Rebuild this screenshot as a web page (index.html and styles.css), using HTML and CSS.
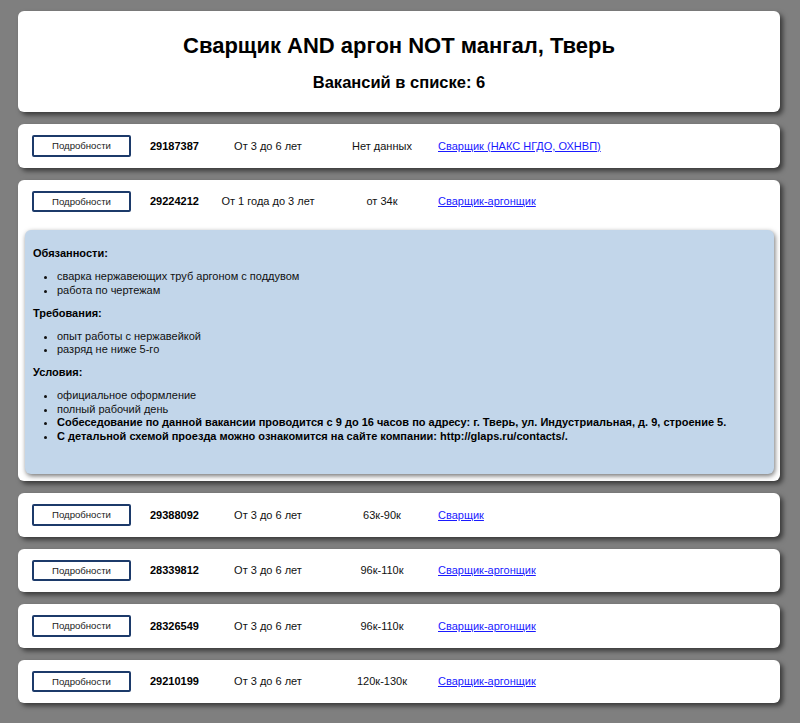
FILE: index.html
```html
<!DOCTYPE html>
<html lang="ru">
<head>
<meta charset="utf-8">
<title>Вакансии</title>
<link rel="stylesheet" href="styles.css">
</head>
<body>
<div class="page">
  <header class="card header">
    <h1 class="title">Сварщик AND аргон NOT мангал, Тверь</h1>
    <h2 class="count">Вакансий в списке: 6</h2>
  </header>

  <div class="card">
    <div class="row">
      <button class="btn">Подробности</button>
      <span class="c-id">29187387</span>
      <span class="c-exp">От 3 до 6 лет</span>
      <span class="c-sal">Нет данных</span>
      <a class="c-name" href="#">Сварщик (НАКС НГДО, ОХНВП)</a>
    </div>
  </div>

  <div class="card">
    <div class="row">
      <button class="btn">Подробности</button>
      <span class="c-id">29224212</span>
      <span class="c-exp">От 1 года до 3 лет</span>
      <span class="c-sal">от 34к</span>
      <a class="c-name" href="#">Сварщик-аргонщик</a>
    </div>
    <div class="details">
      <p class="sec"><strong>Обязанности:</strong></p>
      <ul class="list">
        <li>сварка нержавеющих труб аргоном с поддувом</li>
        <li>работа по чертежам</li>
      </ul>
      <p class="sec"><strong>Требования:</strong></p>
      <ul class="list">
        <li>опыт работы с нержавейкой</li>
        <li>разряд не ниже 5-го</li>
      </ul>
      <p class="sec"><strong>Условия:</strong></p>
      <ul class="list last">
        <li>официальное оформление</li>
        <li>полный рабочий день</li>
        <li><strong>Собеседование по данной вакансии проводится с 9 до 16 часов по адресу: г. Тверь, ул. Индустриальная, д. 9, строение 5.</strong></li>
        <li><strong>С детальной схемой проезда можно ознакомится на сайте компании: http://glaps.ru/contacts/.</strong></li>
      </ul>
    </div>
  </div>

  <div class="card">
    <div class="row">
      <button class="btn">Подробности</button>
      <span class="c-id">29388092</span>
      <span class="c-exp">От 3 до 6 лет</span>
      <span class="c-sal">63к-90к</span>
      <a class="c-name" href="#">Сварщик</a>
    </div>
  </div>

  <div class="card">
    <div class="row">
      <button class="btn">Подробности</button>
      <span class="c-id">28339812</span>
      <span class="c-exp">От 3 до 6 лет</span>
      <span class="c-sal">96к-110к</span>
      <a class="c-name" href="#">Сварщик-аргонщик</a>
    </div>
  </div>

  <div class="card">
    <div class="row">
      <button class="btn">Подробности</button>
      <span class="c-id">28326549</span>
      <span class="c-exp">От 3 до 6 лет</span>
      <span class="c-sal">96к-110к</span>
      <a class="c-name" href="#">Сварщик-аргонщик</a>
    </div>
  </div>

  <div class="card">
    <div class="row">
      <button class="btn">Подробности</button>
      <span class="c-id">29210199</span>
      <span class="c-exp">От 3 до 6 лет</span>
      <span class="c-sal">120к-130к</span>
      <a class="c-name" href="#">Сварщик-аргонщик</a>
    </div>
  </div>
</div>
</body>
</html>
```

FILE: styles.css
```css
html, body {
  margin: 0;
  padding: 0;
  background: #7f7f7f;
  font-family: "Liberation Sans", Arial, sans-serif;
  font-size: 11px;
  color: #111;
}

.page {
  padding: 11px 20px 20px 18px;
  display: flex;
  flex-direction: column;
  gap: 12px;
}

.card {
  background: #fff;
  border-radius: 6px;
  box-shadow: 3px 3px 5px rgba(0, 0, 0, 0.55);
}

.header {
  padding: 22px 10px 21px;
  text-align: center;
}

.title {
  margin: 0 0 14px;
  font-size: 22px;
  line-height: 26px;
  font-weight: bold;
  color: #000;
}

.count {
  margin: 0;
  font-size: 16.5px;
  line-height: 18px;
  font-weight: bold;
  color: #000;
}

.row {
  display: flex;
  align-items: center;
  padding: 11px 14px;
}

.btn {
  width: 99px;
  height: 21.5px;
  box-sizing: border-box;
  background: #fff;
  border: 2px solid #1c3a6a;
  border-radius: 2px;
  font-family: "Liberation Sans", Arial, sans-serif;
  font-size: 9.6px;
  color: #222;
  padding: 0;
  margin: 0;
}

.c-id {
  margin-left: 19px;
  width: 60px;
  font-weight: bold;
  color: #000;
}

.c-exp {
  width: 116px;
  text-align: center;
}

.c-sal {
  width: 112px;
  text-align: center;
}

.c-name {
  color: #1a1aff;
  text-decoration: underline;
}

.details {
  margin: 7px 6px 7px 7px;
  background: #c2d6ea;
  border-radius: 6px;
  padding: 17px 8px 31px;
  box-shadow: 1px 2px 5px rgba(0, 0, 0, 0.55);
  line-height: 13.5px;
}

.sec {
  margin: 0;
  color: #000;
}

.list {
  margin: 9.5px 0;
  padding-left: 24px;
}

.list.last {
  margin-bottom: 0;
}

.list li strong {
  color: #000;
}
```
